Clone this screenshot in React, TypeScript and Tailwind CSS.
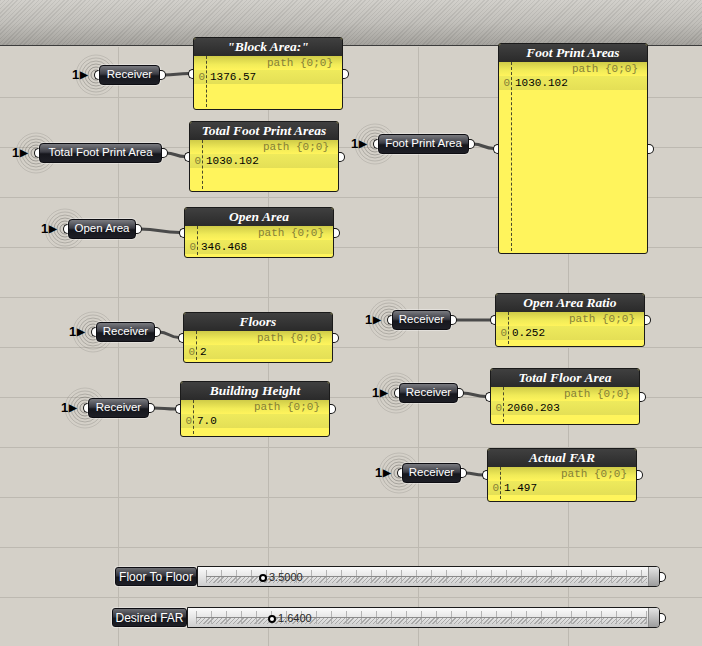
import React from "react";

interface Recv {
  x: number;
  y: number;
  w: number;
  label: string;
}

interface PanelData {
  x: number;
  y: number;
  h: number;
  title: string;
  value: string;
}

const receivers: Recv[] = [
  { x: 99, y: 65, w: 61, label: "Receiver" },
  { x: 39, y: 143, w: 123, label: "Total Foot Print Area" },
  { x: 68, y: 219, w: 68, label: "Open Area" },
  { x: 378, y: 134, w: 91, label: "Foot Print Area" },
  { x: 96, y: 322, w: 59, label: "Receiver" },
  { x: 88, y: 398, w: 61, label: "Receiver" },
  { x: 392, y: 310, w: 59, label: "Receiver" },
  { x: 399, y: 383, w: 59, label: "Receiver" },
  { x: 402, y: 463, w: 59, label: "Receiver" },
];

const panels: PanelData[] = [
  { x: 193, y: 37, h: 73, title: '"Block Area:"', value: "1376.57" },
  { x: 189, y: 121, h: 71, title: "Total Foot Print Areas", value: "1030.102" },
  { x: 184, y: 207, h: 51, title: "Open Area", value: "346.468" },
  { x: 498, y: 43, h: 211, title: "Foot Print Areas", value: "1030.102" },
  { x: 183, y: 312, h: 51, title: "Floors", value: "2" },
  { x: 180, y: 381, h: 56, title: "Building Height", value: "7.0" },
  { x: 495, y: 293, h: 54, title: "Open Area Ratio", value: "0.252" },
  { x: 490, y: 368, h: 57, title: "Total Floor Area", value: "2060.203" },
  { x: 487, y: 448, h: 54, title: "Actual FAR", value: "1.497" },
];

const RH = 20;
const PW = 150;

// little white grip on node edges
const Grip: React.FC<{ x: number; y: number; side: "l" | "r" }> = ({ x, y, side }) => (
  <div
    className={`absolute h-[10px] w-[6px] border-[1.5px] border-[#111] bg-white ${
      side === "l" ? "rounded-l-full border-r-0" : "rounded-r-full border-l-0"
    }`}
    style={{ left: x, top: y - 5 }}
  />
);

const Receiver: React.FC<{ r: Recv }> = ({ r }) => (
  <>
    <div
      className="absolute flex items-center font-['Liberation_Sans',Arial,sans-serif] text-[13px] font-bold leading-none text-black"
      style={{ left: r.x - 27, top: r.y + 3 }}
    >
      <span>1</span>
      <span className="ml-[1px] text-[10px]">▶</span>
    </div>
    <Grip x={r.x - 5} y={r.y + RH / 2} side="l" />
    <div
      className="absolute flex items-center justify-center rounded-[4px] border border-[#0d0d12] bg-[linear-gradient(to_bottom,#7a7b80_0%,#3b3c44_45%,#16171d_55%,#1e1f26_100%)] font-['Liberation_Sans',Arial,sans-serif] text-[11.5px] leading-none text-white shadow-[0_0_0_1px_rgba(255,255,255,0.35)]"
      style={{ left: r.x, top: r.y, width: r.w, height: RH }}
    >
      {r.label}
    </div>
    <Grip x={r.x + r.w} y={r.y + RH / 2} side="r" />
  </>
);

const Panel: React.FC<{ p: PanelData }> = ({ p }) => (
  <>
    <Grip x={p.x - 5} y={p.y + p.h / 2} side="l" />
    <div
      className="absolute flex flex-col overflow-hidden rounded-[3px] border border-[#1a1a1a] bg-[#fff45c]"
      style={{ left: p.x, top: p.y, width: PW, height: p.h }}
    >
      <div className="flex h-[18px] shrink-0 items-center justify-center bg-[linear-gradient(to_bottom,#404040,#2a2a2a)] font-['Liberation_Serif','Times_New_Roman',serif] text-[13.5px] font-bold italic leading-none text-white">
        {p.title}
      </div>
      <div className="relative flex-1">
        <div className="flex h-[14px] items-center justify-end bg-[linear-gradient(to_bottom,#cfcb48,#f1eb58_60%,#fff45c)] pr-[9px] font-['Liberation_Mono','Courier_New',monospace] text-[11px] leading-none text-[#857f36]">
          path {"{0;0}"}
        </div>
        <div className="flex h-[14px] items-center bg-[linear-gradient(to_bottom,#eeea5c,#e4df56)] font-['Liberation_Mono','Courier_New',monospace] text-[11px] leading-none">
          <span className="w-[11px] text-right text-[#857f36]">0</span>
          <span className="ml-[5px] text-black">{p.value}</span>
        </div>
        <div className="absolute bottom-[2px] left-[12px] top-0 border-l border-dashed border-[#4a4a2a]" />
      </div>
    </div>
    <Grip x={p.x + PW} y={p.y + p.h / 2} side="r" />
  </>
);

const Slider: React.FC<{
  x: number;
  y: number;
  labelW: number;
  label: string;
  knob: number;
  value: string;
}> = ({ x, y, labelW, label, knob, value }) => (
  <>
    <div className="absolute flex h-[21px] items-center" style={{ left: x, top: y, width: 660 - x }}>
      <div
        className="flex h-[19px] shrink-0 items-center justify-center rounded-[3px] border border-[#0d0d12] bg-[linear-gradient(to_bottom,#6e6f74_0%,#34353c_45%,#15161b_55%,#1e1f26_100%)] font-['Liberation_Sans',Arial,sans-serif] text-[12px] leading-none text-white shadow-[0_0_0_1px_rgba(255,255,255,0.35)]"
        style={{ width: labelW }}
      >
        {label}
      </div>
      <div className="relative h-[21px] flex-1 rounded-r-[4px] border border-[#1a1a1a] bg-[linear-gradient(to_bottom,#fbfbfb,#e8e8e8_45%,#cdcdcd)]">
        <div className="absolute bottom-[3px] left-[8px] right-[12px] top-[3px] bg-[repeating-linear-gradient(90deg,#b4b4b4_0px,#b4b4b4_1px,transparent_1px,transparent_15px)]" />
        <div className="absolute bottom-[3px] left-[8px] right-[12px] top-[10px] bg-[repeating-linear-gradient(135deg,#a9a9a9_0px,#a9a9a9_1px,transparent_1px,transparent_3px)]" />
        <div className="absolute left-[8px] right-[12px] top-[9px] h-px bg-[#8a8a8a]" />
        <div className="absolute bottom-0 right-0 top-0 w-[11px] rounded-r-[3px] border-l border-[#8c8c8c] bg-[linear-gradient(to_bottom,#e4e4e4,#9c9c9c)]" />
        <div
          className="absolute top-[5px] flex items-center"
          style={{ left: knob - x - labelW - 5 }}
        >
          <div className="h-[8px] w-[8px] rounded-full border-2 border-black bg-white" />
          <span className="ml-[2px] font-['Liberation_Sans',Arial,sans-serif] text-[11px] leading-none text-[#2a2a2a]">
            {value}
          </span>
        </div>
      </div>
    </div>
    <Grip x={660} y={y + 11} side="r" />
  </>
);

export default function App() {
  const hLines = Array.from({ length: 11 }, (_, i) => 97 + i * 50);
  const vLines = [118, 268, 418, 568];

  const wires = receivers.map((r, i) => {
    const p = panels[i];
    const x1 = r.x + r.w + 4;
    const y1 = r.y + RH / 2;
    const x2 = p.x - 4;
    const y2 = p.y + p.h / 2;
    const dx = (x2 - x1) / 2;
    return `M${x1} ${y1} C${x1 + dx} ${y1} ${x2 - dx} ${y2} ${x2} ${y2}`;
  });

  return (
    <div className="relative h-[646px] w-[702px] overflow-hidden bg-[#d4d0c8]">
      <div className="h-[46px] border-b border-[#3c3c3c] bg-[repeating-linear-gradient(135deg,rgba(0,0,0,0.07)_0px,rgba(0,0,0,0.07)_1px,transparent_1px,transparent_3px),linear-gradient(to_bottom,#d2d0cb,#c2c0bb_50%,#a4a29d)]" />

      <svg className="absolute inset-0" width={702} height={646}>
        {hLines.map((y) => (
          <line key={y} x1={0} x2={702} y1={y + 0.5} y2={y + 0.5} stroke="#bdb9b1" />
        ))}
        {vLines.map((x) => (
          <line key={x} x1={x + 0.5} x2={x + 0.5} y1={47} y2={646} stroke="#bdb9b1" />
        ))}
        {receivers.map((r, i) =>
          [5, 8, 11, 14, 17, 20].map((rad, j) => (
            <circle
              key={`${i}-${j}`}
              cx={r.x - 3}
              cy={r.y + RH / 2}
              r={rad}
              fill="none"
              stroke="#000"
              strokeOpacity={0.3 - j * 0.04}
            />
          ))
        )}
        {wires.map((d, i) => (
          <path key={i} d={d} fill="none" stroke="#4a4a4a" strokeWidth={3} />
        ))}
      </svg>

      {panels.map((p) => (
        <Panel key={p.title} p={p} />
      ))}
      {receivers.map((r, i) => (
        <Receiver key={i} r={r} />
      ))}

      <Slider x={115} y={566} labelW={82} label="Floor To Floor" knob={263} value="3.5000" />
      <Slider x={112} y={607} labelW={75} label="Desired FAR" knob={272} value="1.6400" />
    </div>
  );
}
